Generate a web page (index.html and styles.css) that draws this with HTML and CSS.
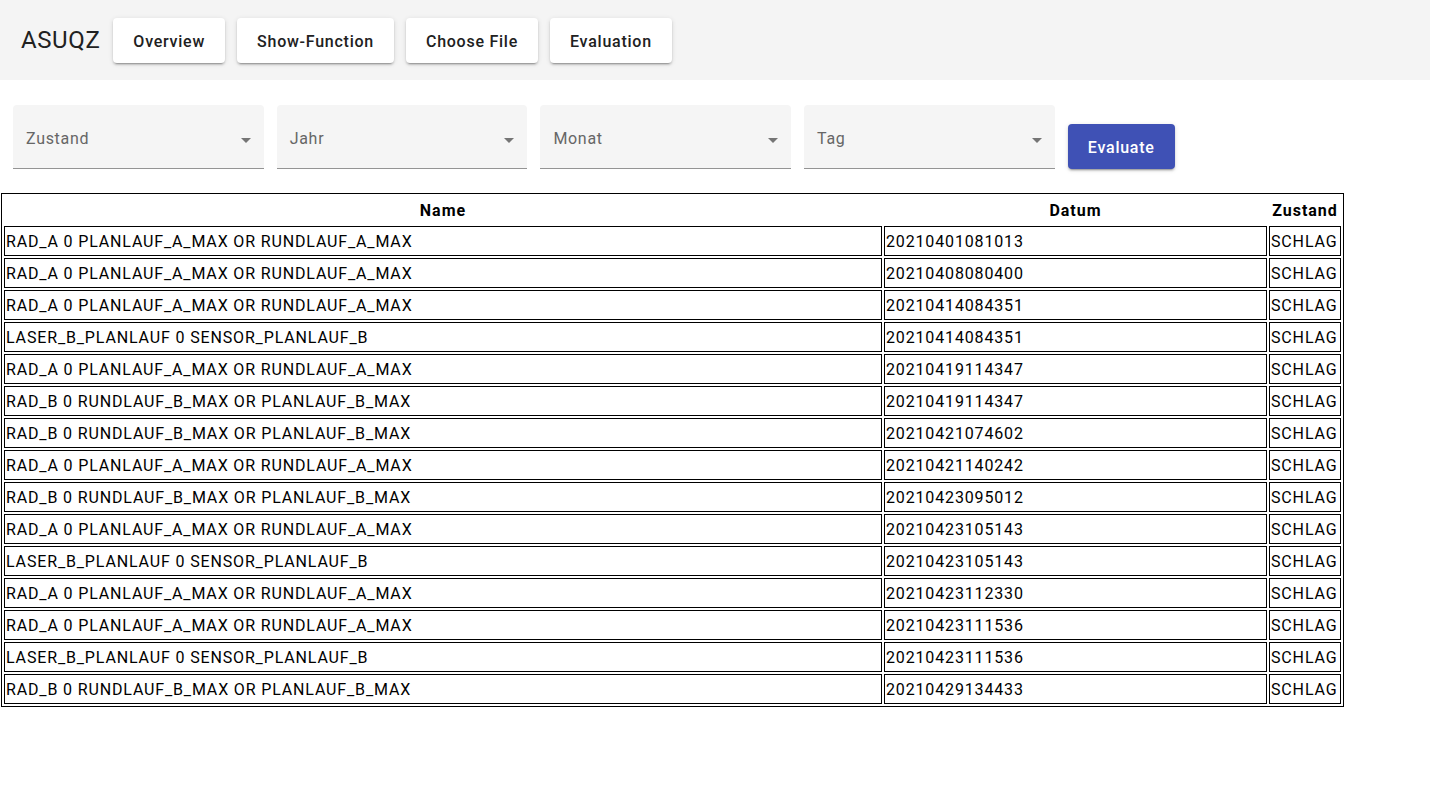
FILE: index.html
```html
<!DOCTYPE html>
<html lang="de">
<head>
<meta charset="utf-8">
<title>ASUQZ</title>
<link rel="stylesheet" href="styles.css">
</head>
<body>
<header class="topbar">
  <span class="brand">ASUQZ</span>
  <nav class="nav">
    <button class="nav-btn">Overview</button>
    <button class="nav-btn">Show-Function</button>
    <button class="nav-btn">Choose File</button>
    <button class="nav-btn">Evaluation</button>
  </nav>
</header>

<section class="filters">
  <div class="field"><span class="field-label">Zustand</span><span class="arrow"></span></div>
  <div class="field"><span class="field-label">Jahr</span><span class="arrow"></span></div>
  <div class="field"><span class="field-label">Monat</span><span class="arrow"></span></div>
  <div class="field"><span class="field-label">Tag</span><span class="arrow"></span></div>
  <button class="eval-btn">Evaluate</button>
</section>

<section class="results">
  <table class="data">
    <thead>
      <tr><th class="c-name">Name</th><th class="c-date">Datum</th><th class="c-state">Zustand</th></tr>
    </thead>
    <tbody>
      <tr><td>RAD_A 0 PLANLAUF_A_MAX OR RUNDLAUF_A_MAX</td><td>20210401081013</td><td>SCHLAG</td></tr>
      <tr><td>RAD_A 0 PLANLAUF_A_MAX OR RUNDLAUF_A_MAX</td><td>20210408080400</td><td>SCHLAG</td></tr>
      <tr><td>RAD_A 0 PLANLAUF_A_MAX OR RUNDLAUF_A_MAX</td><td>20210414084351</td><td>SCHLAG</td></tr>
      <tr><td>LASER_B_PLANLAUF 0 SENSOR_PLANLAUF_B</td><td>20210414084351</td><td>SCHLAG</td></tr>
      <tr><td>RAD_A 0 PLANLAUF_A_MAX OR RUNDLAUF_A_MAX</td><td>20210419114347</td><td>SCHLAG</td></tr>
      <tr><td>RAD_B 0 RUNDLAUF_B_MAX OR PLANLAUF_B_MAX</td><td>20210419114347</td><td>SCHLAG</td></tr>
      <tr><td>RAD_B 0 RUNDLAUF_B_MAX OR PLANLAUF_B_MAX</td><td>20210421074602</td><td>SCHLAG</td></tr>
      <tr><td>RAD_A 0 PLANLAUF_A_MAX OR RUNDLAUF_A_MAX</td><td>20210421140242</td><td>SCHLAG</td></tr>
      <tr><td>RAD_B 0 RUNDLAUF_B_MAX OR PLANLAUF_B_MAX</td><td>20210423095012</td><td>SCHLAG</td></tr>
      <tr><td>RAD_A 0 PLANLAUF_A_MAX OR RUNDLAUF_A_MAX</td><td>20210423105143</td><td>SCHLAG</td></tr>
      <tr><td>LASER_B_PLANLAUF 0 SENSOR_PLANLAUF_B</td><td>20210423105143</td><td>SCHLAG</td></tr>
      <tr><td>RAD_A 0 PLANLAUF_A_MAX OR RUNDLAUF_A_MAX</td><td>20210423112330</td><td>SCHLAG</td></tr>
      <tr><td>RAD_A 0 PLANLAUF_A_MAX OR RUNDLAUF_A_MAX</td><td>20210423111536</td><td>SCHLAG</td></tr>
      <tr><td>LASER_B_PLANLAUF 0 SENSOR_PLANLAUF_B</td><td>20210423111536</td><td>SCHLAG</td></tr>
      <tr><td>RAD_B 0 RUNDLAUF_B_MAX OR PLANLAUF_B_MAX</td><td>20210429134433</td><td>SCHLAG</td></tr>
    </tbody>
  </table>
</section>
</body>
</html>
```

FILE: styles.css
```css
html, body {
  margin: 0;
  padding: 0;
  background: #ffffff;
  font-family: Roboto, "Helvetica Neue", sans-serif;
}

.topbar {
  display: flex;
  align-items: center;
  height: 80px;
  padding-left: 21px;
  background: #f4f4f4;
  box-sizing: border-box;
}

.brand {
  font-size: 24px;
  font-weight: 400;
  letter-spacing: 0.6px;
  color: #212121;
  margin-right: 13px;
  line-height: 1;
}

.nav {
  display: flex;
  gap: 12px;
  padding-top: 1px;
}

.nav-btn {
  height: 45px;
  padding: 2px 20px 0 20px;
  border: 0;
  border-radius: 4px;
  background: #ffffff;
  color: #212121;
  font-family: Roboto, sans-serif;
  font-size: 16px;
  font-weight: 500;
  letter-spacing: 0.75px;
  box-shadow: 0 3px 1px -2px rgba(0,0,0,.2), 0 2px 2px 0 rgba(0,0,0,.14), 0 1px 5px 0 rgba(0,0,0,.12);
}

.filters {
  display: flex;
  align-items: flex-start;
  gap: 13.2px;
  padding: 25px 0 0 13px;
}

.field {
  display: flex;
  align-items: center;
  width: 250.5px;
  height: 64px;
  box-sizing: border-box;
  padding: 4px 13px 0 13px;
  background: #f5f5f5;
  border-radius: 4px 4px 0 0;
  border-bottom: 1px solid #949494;
}

.field-label {
  font-size: 16px;
  letter-spacing: 0.7px;
  color: #666666;
}

.arrow {
  margin-left: auto;
  margin-right: 0;
  margin-top: 4px;
  width: 0;
  height: 0;
  border-left: 5px solid transparent;
  border-right: 5px solid transparent;
  border-top: 5px solid #757575;
}

.eval-btn {
  margin-top: 19px;
  width: 107px;
  height: 45px;
  padding: 2px 0 0 0;
  border: 0;
  border-radius: 4px;
  background: #3f51b5;
  color: #ffffff;
  font-family: Roboto, sans-serif;
  font-size: 16px;
  font-weight: 500;
  letter-spacing: 0.75px;
  box-shadow: 0 3px 1px -2px rgba(0,0,0,.2), 0 2px 2px 0 rgba(0,0,0,.14), 0 1px 5px 0 rgba(0,0,0,.12);
}

.results {
  padding: 24px 0 0 1px;
}

.data {
  width: 1343px;
  table-layout: fixed;
  border: 1px solid #000000;
  border-spacing: 2px;
  font-size: 16px;
  color: #000000;
}

.data th,
.data td {
  padding: 2px 1px 0 1px;
  line-height: 26px;
  box-sizing: border-box;
  white-space: nowrap;
  overflow: hidden;
}

.data th {
  font-weight: 700;
  letter-spacing: 1px;
  text-align: center;
}

.data td {
  border: 1px solid #000000;
  text-align: left;
  letter-spacing: 0.85px;
}

.c-name { width: 878px; }
.c-date { width: 383px; }
.c-state { width: 72px; }
```
